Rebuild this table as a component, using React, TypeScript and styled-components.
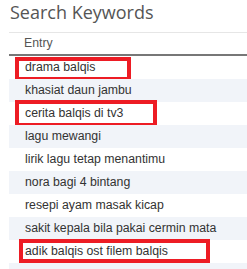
import styled, { createGlobalStyle } from "styled-components";

const GlobalStyle = createGlobalStyle`
  html, body {
    margin: 0;
    padding: 0;
    background: #fff;
  }
`;

const Panel = styled.div`
  padding: 0 0 0 9px;
  width: 247px;
  height: 269px;
  box-sizing: border-box;
  overflow: hidden;
`;

const Title = styled.h2`
  margin: 0;
  padding: 0 0 0 1px;
  height: 32px;
  font-family: "Open Sans", sans-serif;
  font-weight: 400;
  font-size: 18px;
  line-height: 24px;
  color: #555;
`;

const Table = styled.div`
  border-top: 1px solid #e6e6e6;
  font-family: "Liberation Sans", Arial, sans-serif;
  font-size: 12.3px;
`;

const HeadCell = styled.div`
  height: 21px;
  line-height: 20px;
  padding-left: 15px;
  color: #555;
  border-bottom: 2px solid #777;
`;

const Row = styled.div<{ $striped: boolean }>`
  position: relative;
  height: 23px;
  line-height: 23px;
  padding-left: 16px;
  color: #333;
  background: ${({ $striped }) => ($striped ? "#f1f4f9" : "#fff")};
  white-space: nowrap;
`;

// red outline drawn over a highlighted entry
const Marker = styled.span<{ $left: number; $top: number; $width: number; $height: number }>`
  position: absolute;
  left: ${({ $left }) => $left}px;
  top: ${({ $top }) => $top}px;
  width: ${({ $width }) => $width}px;
  height: ${({ $height }) => $height}px;
  border: 4px solid #ed1c24;
  box-sizing: border-box;
  pointer-events: none;
`;

type Entry = {
  text: string;
  mark?: { left: number; top: number; width: number; height: number };
};

const entries: Entry[] = [
  { text: "drama balqis", mark: { left: 6, top: 1, width: 116, height: 24 } },
  { text: "khasiat daun jambu" },
  { text: "cerita balqis di tv3", mark: { left: 6, top: -2, width: 142, height: 27 } },
  { text: "lagu mewangi" },
  { text: "lirik lagu tetap menantimu" },
  { text: "nora bagi 4 bintang" },
  { text: "resepi ayam masak kicap" },
  { text: "sakit kepala bila pakai cermin mata" },
  { text: "adik balqis ost filem balqis", mark: { left: 10, top: -1, width: 191, height: 24 } },
  { text: "" },
];

export default function App() {
  return (
    <Panel>
      <GlobalStyle />
      <Title>Search Keywords</Title>
      <Table>
        <HeadCell>Entry</HeadCell>
        {entries.map((e, i) => (
          <Row key={i} $striped={i % 2 === 1}>
            {e.text}
            {e.mark && (
              <Marker
                $left={e.mark.left}
                $top={e.mark.top}
                $width={e.mark.width}
                $height={e.mark.height}
              />
            )}
          </Row>
        ))}
      </Table>
    </Panel>
  );
}
